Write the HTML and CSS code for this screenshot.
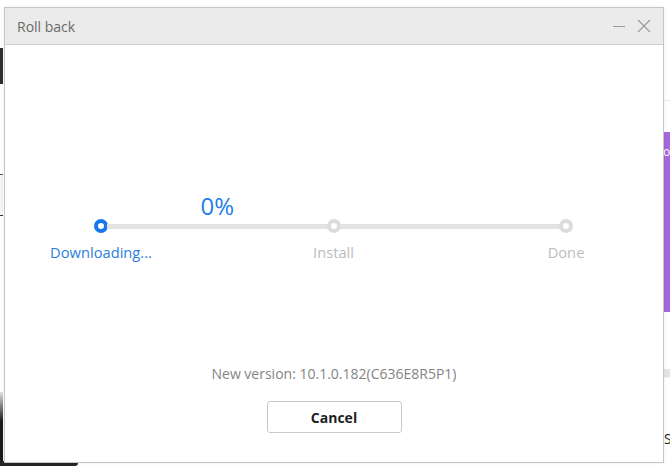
FILE: index.html
```html
<!DOCTYPE html>
<html>
<head>
<meta charset="utf-8">
<link rel="stylesheet" href="styles.css">
</head>
<body>
<div class="desk-left-top"></div>
<div class="desk-left-mid"></div>
<div class="desk-left-bottom"></div>
<div class="desk-bottom-bar"></div>
<div class="desk-right-line"></div>
<div class="desk-right-purple">os</div>
<div class="desk-right-grey"></div>
<div class="desk-right-text">S</div>

<div class="dialog">
  <div class="titlebar">
    <span class="title">Roll back</span>
    <div class="win-btns">
      <svg class="win-icon" width="14" height="14" viewBox="0 0 14 14"><path d="M1 7.5H13" stroke="#9a9a9a" stroke-width="1" fill="none"/></svg>
      <svg class="win-icon" width="14" height="14" viewBox="0 0 14 14"><path d="M1 1L13 13M13 1L1 13" stroke="#9a9a9a" stroke-width="1.1" fill="none"/></svg>
    </div>
  </div>
  <div class="content">
    <div class="stepper">
      <div class="row percent-row">
        <div class="dot-col"></div>
        <div class="seg-col"><span class="percent">0%</span></div>
        <div class="dot-col"></div>
        <div class="seg-col"></div>
        <div class="dot-col"></div>
      </div>
      <div class="row track-row">
        <div class="dot active"></div>
        <div class="line"></div>
        <div class="dot"></div>
        <div class="line"></div>
        <div class="dot"></div>
      </div>
      <div class="row label-row">
        <div class="dot-col"><span class="label active">Downloading...</span></div>
        <div class="seg-col"></div>
        <div class="dot-col"><span class="label">Install</span></div>
        <div class="seg-col"></div>
        <div class="dot-col"><span class="label">Done</span></div>
      </div>
    </div>
    <div class="version">New version: 10.1.0.182(C636E8R5P1)</div>
    <button class="cancel">Cancel</button>
  </div>
</div>
</body>
</html>
```
FILE: styles.css
```css
html, body {
  margin: 0;
  padding: 0;
}
body {
  width: 670px;
  height: 470px;
  background: #ffffff;
  position: relative;
  overflow: hidden;
  font-family: "Open Sans", "Noto Sans", sans-serif;
  padding: 7px 0 0 4px;
  box-sizing: border-box;
}

/* background desktop fragments */
.desk-left-top { position: absolute; left: 0; top: 48px; width: 3px; height: 36px; background: #2e2e2e; }
.desk-left-mid { position: absolute; left: 0; top: 174px; width: 3px; height: 42px; border-top: 1px solid #555; border-bottom: 1px solid #333; box-sizing: border-box; background: #f4f4f4; }
.desk-left-bottom { position: absolute; left: 0; top: 392px; width: 3px; height: 74px; background: linear-gradient(#e0e0e0, #1a1a1a 40%); }
.desk-bottom-bar { position: absolute; left: 0; top: 461px; width: 78px; height: 5px; background: #262626; border-radius: 0 0 3px 0; }
.desk-right-line { position: absolute; right: 0; top: 100px; width: 6px; height: 1px; background: #e6e6e6; }
.desk-right-purple { position: absolute; right: 0; top: 132px; width: 6px; height: 180px; background: #a567dc; color: #fff; font-size: 12px; line-height: 14px; padding-top: 13px; box-sizing: border-box; overflow: hidden; text-indent: -1px; }
.desk-right-grey { position: absolute; right: 0; top: 369px; width: 6px; height: 8px; background: #e4e4e4; border-bottom: 1px solid #eee; }
.desk-right-text { position: absolute; right: -3px; top: 429px; width: 9px; font-size: 14px; color: #222; overflow: hidden; }

.dialog {
  position: relative;
  width: 660px;
  height: 456px;
  box-sizing: border-box;
  border: 1px solid #c6c6c6;
  background: #ffffff;
  display: flex;
  flex-direction: column;
  box-shadow: 0 0 3px rgba(0,0,0,0.08);
}
.titlebar {
  height: 37px;
  background: #ebebeb;
  border-bottom: 1px solid #cfcfcf;
  box-sizing: border-box;
  display: flex;
  align-items: center;
  justify-content: space-between;
  padding: 0 12px 0 12px;
}
.title {
  font-size: 14px;
  color: #6a6a6a;
}
.win-btns {
  display: flex;
  gap: 11px;
  align-items: center;
}
.win-icon { display: block; }

.content {
  flex: 1;
  display: flex;
  flex-direction: column;
  align-items: center;
  padding-top: 149px;
}
.stepper {
  width: 479px;
  margin-left: -1px;
}
.row {
  display: flex;
}
.dot-col {
  width: 14px;
  flex: none;
  display: flex;
  justify-content: center;
}
.seg-col {
  flex: 1;
  display: flex;
  justify-content: center;
}
.percent-row { height: 25px; }
.percent {
  font-size: 24px;
  line-height: 24px;
  color: #1f7fe6;
  white-space: nowrap;
}
.track-row {
  align-items: center;
  height: 14px;
}
.dot {
  width: 14px;
  height: 14px;
  box-sizing: border-box;
  border-radius: 50%;
  border: 4px solid #dcdcdc;
  background: #fff;
  flex: none;
}
.dot.active { border-color: #1677ee; }
.line {
  flex: 1;
  height: 5px;
  background: #e3e3e3;
  margin: 0 -1px;
}
.label-row { margin-top: 9px; height: 20px; }
.label {
  font-size: 14.7px;
  line-height: 20px;
  color: #bdbdbd;
  white-space: nowrap;
}
.label.active { color: #2d80da; }

.version {
  margin-top: 102px;
  font-size: 14px;
  line-height: 20px;
  color: #848484;
}
.cancel {
  margin-top: 17px;
  width: 135px;
  height: 32px;
  background: #fff;
  border: 1px solid #c9c9c9;
  border-radius: 3px;
  font-family: "Open Sans", "Noto Sans", sans-serif;
  font-weight: bold;
  font-size: 14px;
  color: #1f1f1f;
  padding: 0;
}
```
